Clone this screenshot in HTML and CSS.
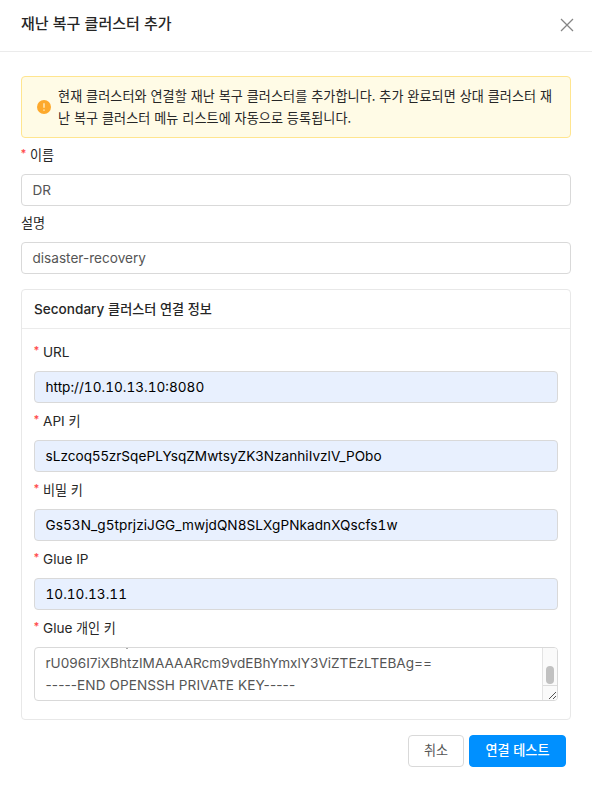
FILE: index.html
```html
<!DOCTYPE html>
<html lang="ko">
<head>
<meta charset="utf-8">
<title>재난 복구 클러스터 추가</title>
<link rel="stylesheet" href="styles.css">
</head>
<body>
<div class="modal">
  <header class="modal-header">
    <h1 class="title">재난 복구 클러스터 추가</h1>
    <svg class="close" viewBox="0 0 14 14"><path d="M1 1l12 12M13 1L1 13"/></svg>
  </header>
  <main class="modal-body">
    <div class="alert">
      <svg class="alert-icon" viewBox="0 0 14 14"><circle cx="7" cy="7" r="7"/><path d="M7 3.3v4.5"/><path d="M7 9.5v1.3"/></svg>
      <p class="alert-text ko"><span class="line">현재 클러스터와 연결할 재난 복구 클러스터를 추가합니다. 추가 완료되면 상대 클러스터 재</span><span class="line">난 복구 클러스터 메뉴 리스트에 자동으로 등록됩니다.</span></p>
    </div>
    <div class="field name">
      <div class="label required"><span class="ko">이름</span></div>
      <div class="input"><span>DR</span></div>
    </div>
    <div class="field desc">
      <div class="label"><span class="ko">설명</span></div>
      <div class="input"><span>disaster-recovery</span></div>
    </div>
    <section class="card">
      <h2 class="card-title">Secondary<span class="ko"> 클러스터 연결 정보</span></h2>
      <div class="card-body">
        <div class="field">
          <div class="label required">URL</div>
          <div class="input filled"><span class="v-url">http://10.10.13.10:8080</span></div>
        </div>
        <div class="field">
          <div class="label required">API<span class="ko"> 키</span></div>
          <div class="input filled"><span class="v-api">sLzcoq55zrSqePLYsqZMwtsyZK3NzanhiIvzlV_PObo</span></div>
        </div>
        <div class="field">
          <div class="label required"><span class="ko">비밀 키</span></div>
          <div class="input filled"><span class="v-secret">Gs53N_g5tprjziJGG_mwjdQN8SLXgPNkadnXQscfs1w</span></div>
        </div>
        <div class="field">
          <div class="label required">Glue IP</div>
          <div class="input filled"><span class="v-ip">10.10.13.11</span></div>
        </div>
        <div class="field">
          <div class="label required">Glue<span class="ko"> 개인 키</span></div>
          <div class="textarea">
            <div class="key"><span>rU096I7iXBhtzIMAAAARcm9vdEBhYmxlY3ViZTEzLTEBAg==</span><span class="v-end">-----END OPENSSH PRIVATE KEY-----</span></div>
            <div class="scrollbar">
              <div class="track"><div class="thumb"></div></div>
              <svg class="resizer" viewBox="0 0 14 14"><path d="M6 13L13 6M10 13L13 10"/></svg>
            </div>
          </div>
        </div>
      </div>
    </section>
    <footer class="actions">
      <button class="btn cancel">취소</button>
      <button class="btn primary">연결 테스트</button>
    </footer>
  </main>
</div>
</body>
</html>
```
FILE: styles.css
```css
* { box-sizing: border-box; }
body {
  margin: 0;
  background: #fff;
  color: #262626;
  font: 13.6px/22px Inter, "Noto Sans CJK KR", sans-serif;
}
.modal { width: 592px; height: 788px; overflow: hidden; }
.modal-header {
  height: 52px;
  padding: 0 18px 3px 21px;
  display: flex;
  align-items: center;
  justify-content: space-between;
  border-bottom: 1px solid #ebebeb;
}
.title {
  margin: 0 0 2px;
  font: 500 15px/22px "Noto Sans CJK KR", sans-serif;
  white-space: nowrap;
}
.close { width: 14px; height: 14px; margin-top: 2px; fill: none; stroke: #858585; stroke-width: 1.25; }
.modal-body { padding: 24px 21px 0; }
.ko { font-family: "Noto Sans CJK KR", sans-serif; font-size: 13.1px; white-space: pre; }
.alert {
  height: 62px;
  padding: 0 0 0 15px;
  display: flex;
  align-items: center;
  gap: 7px;
  border: 1px solid #ffe58f;
  border-radius: 4px;
  background: #fffbe6;
}
.alert-icon { width: 14px; height: 14px; flex: none; fill: #fda92c; stroke: #fff3cf; stroke-width: 1.3; }
.alert-icon circle { stroke: none; }
.alert-text { margin: 0; line-height: 22px; letter-spacing: .09px; }
.line { display: block; }
.label {
  height: 36px;
  padding-top: 6px;
  display: flex;
  line-height: 22px;
  white-space: pre;
}
.required::before {
  content: "*";
  width: 9.5px;
  margin-left: -.5px;
  color: #ff4d4f;
  font: 600 11px/18px Inter, sans-serif;
}
.input {
  height: 32px;
  padding: 0 10.5px;
  display: flex;
  align-items: center;
  border: 1px solid #d9d9d9;
  border-radius: 4px;
  color: #555;
  white-space: nowrap;
}
.filled { background: #e8f0fe; color: #000; }
.v-url, .v-ip, .v-secret { font-variant-numeric: tabular-nums; }
.v-api { letter-spacing: .03px; }
.v-secret { letter-spacing: .06px; }
.v-end { letter-spacing: .07px; }
.card { height: 431px; margin-top: 15px; border: 1px solid #e8e8e8; border-radius: 4px; }
.card-title {
  height: 39px;
  margin: 0;
  padding: 0 12px;
  font-size: 13.6px;
  font-weight: 500;
  line-height: 38px;
  border-bottom: 1px solid #ebebeb;
  white-space: pre;
}
.card-body { padding: 5px 12px 0; }
.card .label { height: 37px; padding-top: 7px; }
.textarea {
  height: 54px;
  display: flex;
  border: 1px solid #d9d9d9;
  border-radius: 4px;
  overflow: hidden;
  color: #555;
}
/* The sliver at the top edge is the descender of the line scrolled out of view. */
.key {
  flex: 1;
  padding: 4px 10.5px;
  white-space: nowrap;
  background: linear-gradient(#aaa, #aaa) 91px 0 / 2px 1px no-repeat;
}
.key span { display: block; }
.scrollbar { width: 15px; display: flex; flex-direction: column; border-left: 1px solid #e3e3e3; background: #fafafa; }
.track { height: 38px; display: flex; justify-content: center; align-items: flex-end; padding-bottom: 1px; border-bottom: 1px solid #dcdcdc; }
.thumb { width: 8px; height: 18px; border-radius: 4px; background: #c1c1c1; }
.resizer { width: 14px; height: 14px; fill: none; stroke: #555; stroke-width: 1; }
.actions { display: flex; justify-content: flex-end; gap: 5px; padding: 15px 5px 0 0; }
.btn {
  height: 32px;
  padding: 0 0 2px;
  border: 1px solid #d9d9d9;
  border-radius: 4px;
  background: #fff;
  color: #555;
  font: 13.1px/20px "Noto Sans CJK KR", sans-serif;
}
.cancel { width: 56px; }
.primary { width: 97px; border-color: #0090ff; background: #0090ff; color: #fff; font-weight: 500; }
```
